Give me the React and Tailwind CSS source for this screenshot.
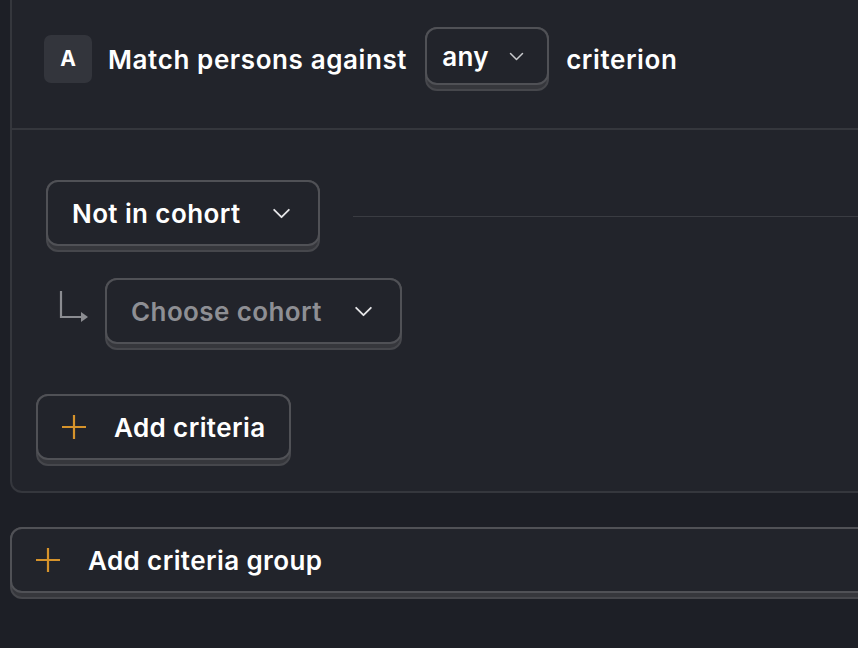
import React from 'react';

const font = { fontFamily: 'Inter, "Noto Sans", sans-serif' };

const Chevron = ({ className }) => (
  <svg viewBox="0 0 20 12" className={className} fill="none" stroke="currentColor" strokeWidth="2" strokeLinecap="round" strokeLinejoin="round">
    <path d="M2 2l8 8 8-8" />
  </svg>
);

const PlusIcon = () => (
  <svg viewBox="0 0 24 24" className="w-6 h-6 text-[#d6932b]" fill="none" stroke="currentColor" strokeWidth="2.2">
    <path d="M0 12h24M12 0v24" />
  </svg>
);

const BranchArrow = () => (
  <svg viewBox="0 0 30 32" className="w-[30px] h-[32px] text-[#8b8c91]">
    <path d="M2 0v26h21" fill="none" stroke="currentColor" strokeWidth="2.2" />
    <path d="M22 21l7 5-7 5z" fill="currentColor" />
  </svg>
);

// 3D-ish button: inner face sits over a darker frame that peeks out below
const Btn = ({ children, inner = '', outer = '' }) => (
  <div className={`rounded-[12px] border-2 border-[#46474c] bg-[#36373c] ${outer}`}>
    <div className={`-mx-[2px] -mt-[2px] mb-[4px] flex items-center rounded-[12px] border-2 border-[#505156] bg-[#22242b] ${inner}`}>
      {children}
    </div>
  </div>
);

const label = 'text-[26px] font-semibold tracking-[0.4px]';
const headLabel = 'text-[26px] font-semibold tracking-[0.6px]';

export default function App() {
  return (
    <div className="w-[858px] h-[648px] overflow-hidden bg-[#1d1f26] text-white" style={font}>
      <div className="w-[920px] pl-[10px]">
        {/* Criteria group card */}
        <div className="rounded-b-[12px] border-2 border-t-0 border-[#35373d] bg-[#22242b]">
          {/* Header */}
          <div className="flex items-center pl-[32px] pt-[27px] pb-[37px] border-b-2 border-[#35373d]">
            <div className="flex items-center h-[64px]">
              <div className="w-12 h-12 rounded-[7px] bg-[#33353c] flex items-center justify-center text-[21px] font-bold">
                A
              </div>
              <span className={`ml-4 ${headLabel}`}>Match persons against</span>
              <Btn outer="ml-[18px] w-[124px]" inner="h-[58px] pl-[15px] pr-[23px] justify-between">
                <span className={label}>any</span>
                <Chevron className="w-[15px] h-[9px] text-[#c9cacd]" />
              </Btn>
              <span className={`ml-[17px] ${headLabel}`}>criterion</span>
            </div>
          </div>

          {/* Criteria body */}
          <div className="pl-[24px] pt-[50px] pb-[25px]">
            <div className="flex items-center pl-[10px]">
              <Btn outer="w-[274px]" inner="h-[66px] pl-[24px] pr-[27px] justify-between">
                <span className={label}>Not in cohort</span>
                <Chevron className="w-[19px] h-[11px] text-[#e6e6e8]" />
              </Btn>
              <div className="flex-1 ml-[33px] h-px bg-[#3a3c42]" />
            </div>

            <div className="flex items-center mt-[26px] pl-[23px]">
              <div className="mb-[14px]">
                <BranchArrow />
              </div>
              <Btn outer="ml-[16px] w-[297px]" inner="h-[66px] pl-[24px] pr-[27px] justify-between">
                <span className={`${label} text-[#8e8f94]`}>Choose cohort</span>
                <Chevron className="w-[19px] h-[11px] text-[#e6e6e8]" />
              </Btn>
            </div>

            <div className="mt-[44px] flex">
              <Btn outer="w-[255px]" inner="h-[66px] pl-[24px]">
                <PlusIcon />
                <span className={`ml-[28px] ${label}`}>Add criteria</span>
              </Btn>
            </div>
          </div>
        </div>

        {/* Add group */}
        <div className="mt-[34px]">
          <Btn inner="h-[66px] pl-[24px] bg-[#1f2128]">
            <PlusIcon />
            <span className={`ml-[28px] ${label}`}>Add criteria group</span>
          </Btn>
        </div>
      </div>
    </div>
  );
}
